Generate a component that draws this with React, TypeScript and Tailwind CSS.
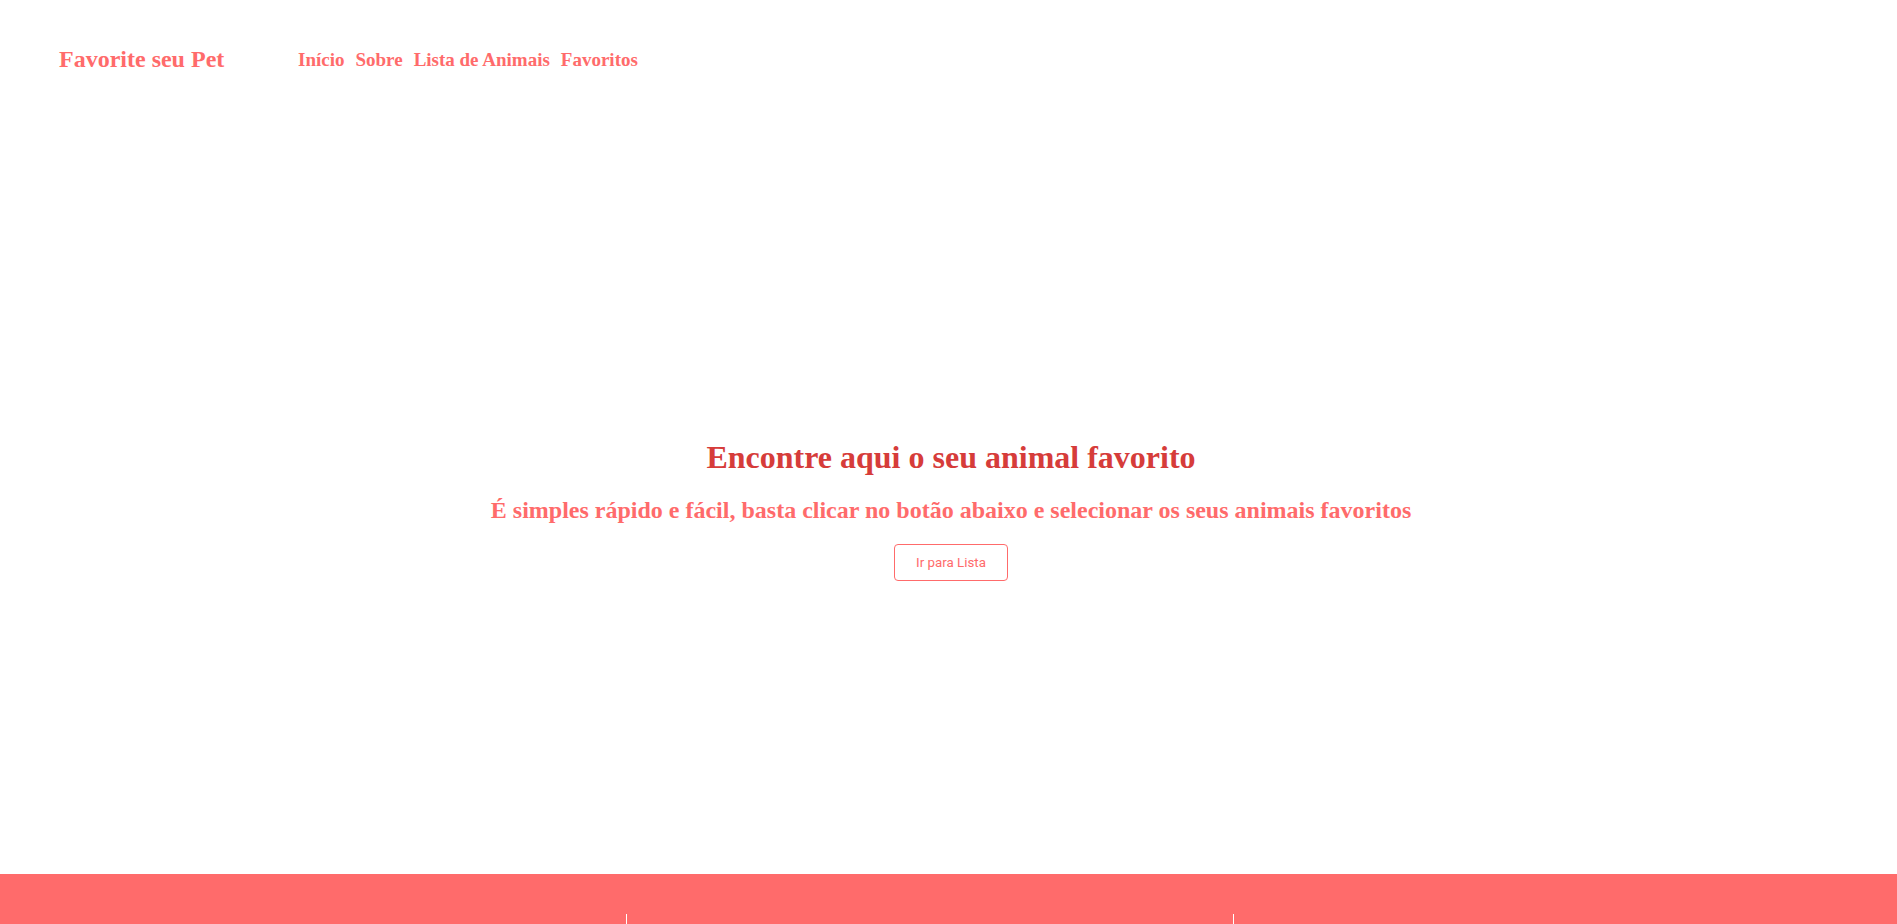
const serif = "font-['Liberation_Serif','Times_New_Roman',serif]"

const links = ['Início', 'Sobre', 'Lista de Animais', 'Favoritos']

function Header() {
  return (
    <header className={`flex items-center h-[120px] pl-[59px] ${serif}`}>
      <div className="w-[239px]">
        <a href="#" className="text-[24px] font-bold text-[#ff6b6b] leading-[normal]">
          Favorite seu Pet
        </a>
      </div>
      <nav className="flex items-center gap-[11px]">
        {links.map((l) => (
          <a
            key={l}
            href="#"
            className="text-[19px] font-bold text-[#ff6b6b] leading-[normal]"
          >
            {l}
          </a>
        ))}
      </nav>
    </header>
  )
}

function Footer() {
  return (
    <footer className="h-[50px] bg-[#ff6b6b] pt-[40px] overflow-hidden">
      <div className="flex h-full">
        <div className="w-[626px]"></div>
        <div className="w-[607px] border-l border-white"></div>
        <div className="flex-1 border-l border-white"></div>
      </div>
    </footer>
  )
}

export default function App() {
  return (
    <div className="min-h-[924px] flex flex-col bg-white">
      <Header />

      <main className={`h-[754px] flex flex-col items-center pt-[319px] pl-[5px] ${serif}`}>
        <h1 className="text-[32px] font-bold text-[#d63c3a] leading-[normal]">
          Encontre aqui o seu animal favorito
        </h1>
        <h2 className="mt-[21px] text-[24px] font-bold text-[#ff6b6b] leading-[normal]">
          É simples rápido e fácil, basta clicar no botão abaixo e selecionar os seus animais favoritos
        </h2>
        <button className="mt-[20px] px-[21px] py-[10px] border border-[#ff6b6b] rounded-[4px] bg-white text-[#ff6b6b] text-[13.333px] leading-[normal] font-['Roboto',sans-serif]">
          Ir para Lista
        </button>
      </main>

      <Footer />
    </div>
  )
}
